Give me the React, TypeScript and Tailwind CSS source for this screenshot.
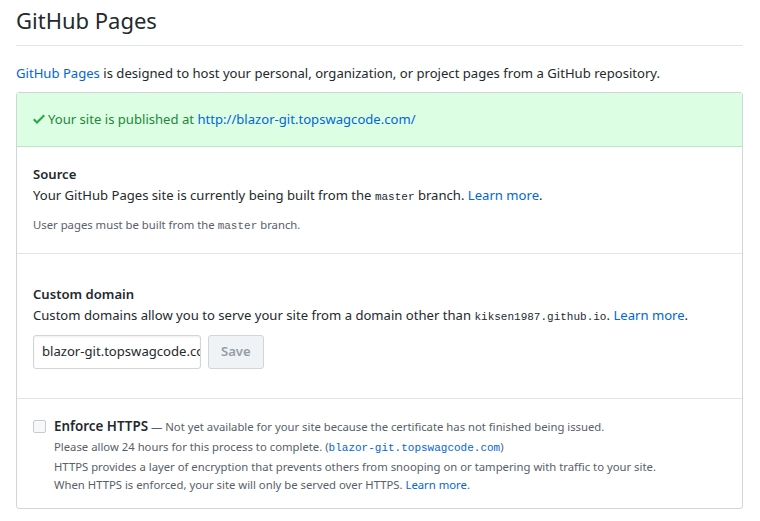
import React from 'react';

const link = 'text-[#0366d6]';
const mono = "font-['Liberation_Mono',monospace] text-[11px]";

const Check: React.FC = () => (
  <svg width="12" height="16" viewBox="0 0 12 16" className="inline-block fill-[#28a745] mr-[3px] align-[-3px]">
    <path fillRule="evenodd" d="M12 5l-8 8-4-4 1.5-1.5L4 10l6.5-6.5L12 5z" />
  </svg>
);

export default function App() {
  return (
    <div className="bg-white min-h-[521px] pl-4 pr-[17px] text-[13.1px] text-[#24292e] font-['Noto_Sans',sans-serif]">
      <div className="pt-[4px] pb-[9px] border-b border-[#e1e4e8]">
        <h2 className="text-[22px] leading-[32px] font-normal">GitHub Pages</h2>
      </div>

      <p className="mt-[16px] leading-[22px]">
        <span className={link}>GitHub Pages</span> is designed to host your personal, organization, or project pages from a GitHub repository.
      </p>

      <div className="mt-[8px] border border-[#d1d5da] rounded-[3px]">
        {/* publish notice */}
        <div className="bg-[#dcffe4] border-b border-[#bde5c5] h-[54px] px-4 flex items-center">
          <span className="text-[#22863a]">
            <Check />
            Your site is published at <span className={link}>http://blazor-git.topswagcode.com/</span>
          </span>
        </div>

        {/* Source */}
        <div className="px-4 pt-[16px] pb-[18px] border-b border-[#e1e4e8]">
          <div className="font-semibold leading-[22px]">Source</div>
          <p className="leading-[20px]">
            Your GitHub Pages site is currently being built from the <code className={mono}>master</code> branch.{' '}
            <span className={link}>Learn more</span>.
          </p>
          <p className="mt-[9px] text-[11.3px] text-[#586069] leading-[18px]">
            User pages must be built from the <code className={mono}>master</code> branch.
          </p>
        </div>

        {/* Custom domain */}
        <div className="px-4 pt-[29px] pb-[29px] border-b border-[#e1e4e8]">
          <div className="font-semibold leading-[22px]">Custom domain</div>
          <p className="leading-[20px]">
            Custom domains allow you to serve your site from a domain other than <code className={mono}>kiksen1987.github.io</code>.{' '}
            <span className={link}>Learn more</span>.
          </p>
          <div className="mt-[8px] flex items-center gap-[7px]">
            <div className="w-[168px] h-[34px] border border-[#d1d5da] rounded-[3px] px-[8px] flex items-center overflow-hidden whitespace-nowrap shadow-[inset_0_1px_2px_rgba(27,31,35,0.075)]">
              blazor-git.topswagcode.com
            </div>
            <div className="h-[34px] px-[12px] border border-[#d1d5da] rounded-[3px] bg-[#eff3f6] text-[#959da5] font-semibold flex items-center">
              Save
            </div>
          </div>
        </div>

        {/* Enforce HTTPS */}
        <div className="px-4 pt-[17px] pb-[14px] flex gap-[8px]">
          <div className="mt-[4px] w-[13px] h-[13px] border border-[#c6cbd1] rounded-[2px] bg-[#f6f8fa] shrink-0" />
          <div>
            <div className="leading-[20px]">
              <span className="font-semibold text-[13.4px]">Enforce HTTPS</span>
              <span className="text-[11.3px] text-[#586069]"> — Not yet available for your site because the certificate has not finished being issued.</span>
            </div>
            <div className="text-[11.3px] text-[#586069] leading-[18px]">
              <p className="leading-[20px]">
                Please allow 24 hours for this process to complete. (<code className={`${mono} ${link}`}>blazor-git.topswagcode.com</code>)
              </p>
              <p>HTTPS provides a layer of encryption that prevents others from snooping on or tampering with traffic to your site.</p>
              <p>
                When HTTPS is enforced, your site will only be served over HTTPS. <span className={link}>Learn more</span>.
              </p>
            </div>
          </div>
        </div>
      </div>
    </div>
  );
}
